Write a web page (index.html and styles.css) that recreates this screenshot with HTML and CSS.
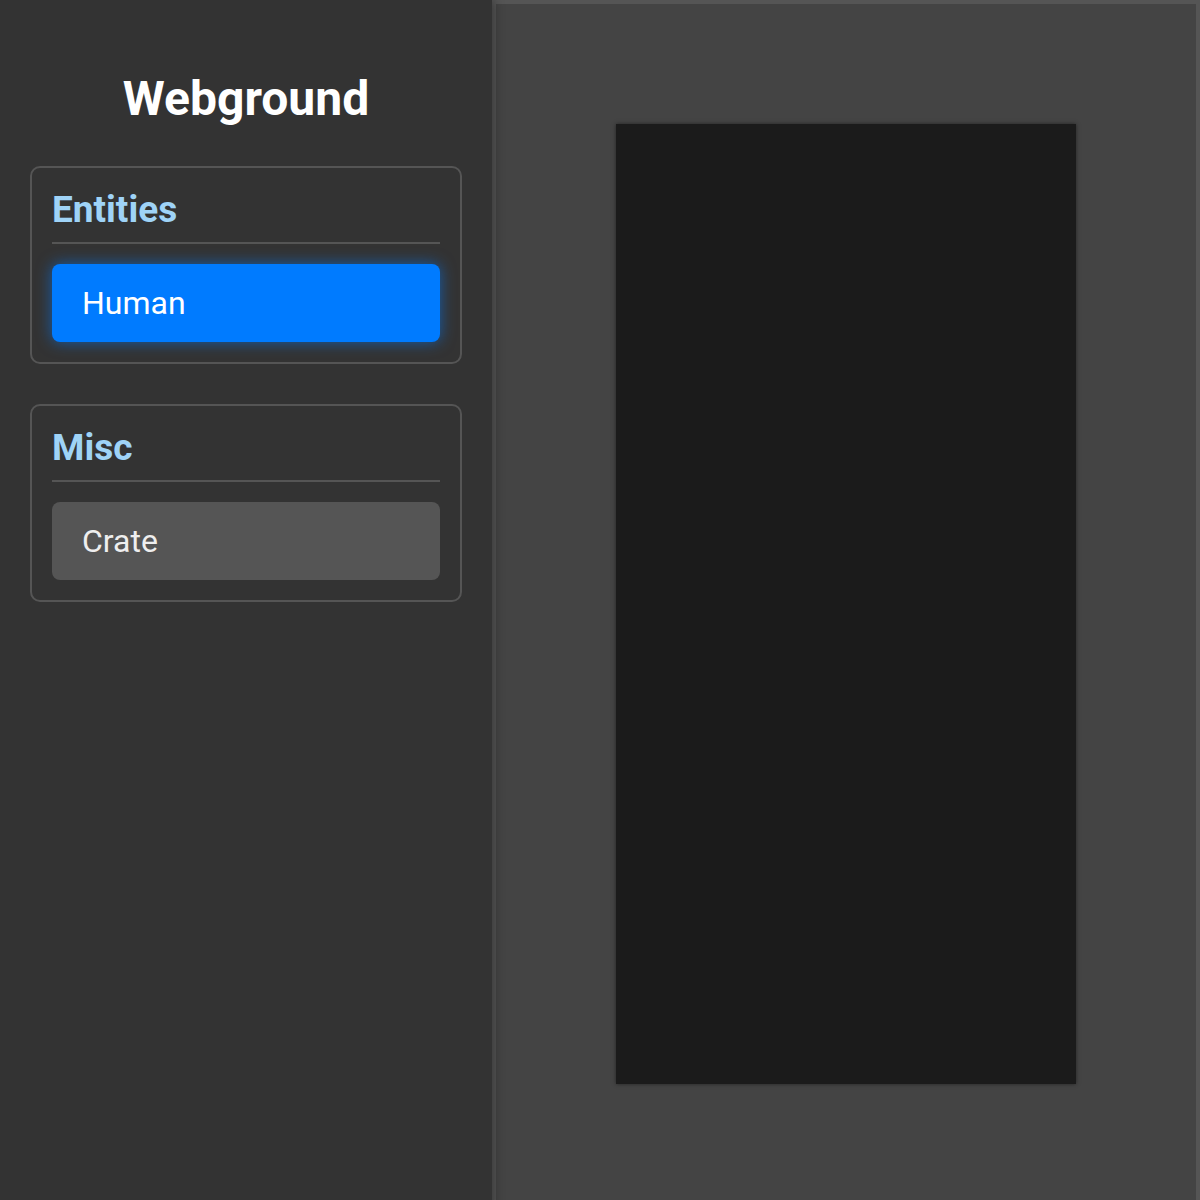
FILE: index.html
```html
<!DOCTYPE html>
<html lang="en">
<head>
    <meta charset="UTF-8">
    <meta name="viewport" content="width=device-width, initial-scale=1.0">
    <title>Webground</title>
    <link rel="stylesheet" href="styles.css">
</head>
<body>
    <div class="app">
        <aside class="sidebar">
            <h1 class="title">Webground</h1>

            <section class="panel">
                <h2 class="panel-title">Entities</h2>
                <button class="tool active">Human</button>
            </section>

            <section class="panel">
                <h2 class="panel-title">Misc</h2>
                <button class="tool">Crate</button>
            </section>
        </aside>

        <main class="stage">
            <div class="canvas"></div>
        </main>
    </div>
</body>
</html>
```

FILE: styles.css
```css
* {
    box-sizing: border-box;
}

body {
    margin: 0;
    font-family: Roboto, "Liberation Sans", sans-serif;
    background-color: #444;
    color: #fff;
    overflow: hidden;
}

.app {
    display: flex;
    min-height: 100vh;
}

.sidebar {
    width: 492px;
    flex-shrink: 0;
    padding: 30px;
    background-color: #333;
    box-shadow: 2px 0 10px rgba(0, 0, 0, 0.35);
    position: relative;
    z-index: 1;
}

.title {
    margin: 40px 0 39px;
    font-size: 48px;
    font-weight: 700;
    text-align: center;
    color: #fff;
}

.panel {
    border: 2px solid #555;
    border-radius: 10px;
    padding: 20px;
    margin-bottom: 40px;
}

.panel-title {
    margin: 0 0 20px;
    padding-bottom: 10px;
    border-bottom: 2px solid #555;
    font-size: 37px;
    line-height: 44px;
    font-weight: 700;
    color: #9fd3f7;
}

.tool {
    display: block;
    width: 100%;
    padding: 20px 30px;
    border: none;
    border-radius: 8px;
    background-color: #555;
    color: #eee;
    font-family: inherit;
    font-size: 32px;
    text-align: left;
    cursor: pointer;
}

.tool.active {
    background-color: #007bff;
    color: #fff;
    box-shadow: 0 0 15px rgba(0, 123, 255, 0.6);
}

.stage {
    flex: 1;
    display: flex;
    justify-content: center;
    align-items: flex-start;
    padding: 120px;
    border: 4px solid #555;
    background-color: #444;
}

.canvas {
    width: 460px;
    height: 960px;
    flex-shrink: 0;
    background-color: #1b1b1b;
    box-shadow: 0 0 4px rgba(0, 0, 0, 0.5);
}
```
